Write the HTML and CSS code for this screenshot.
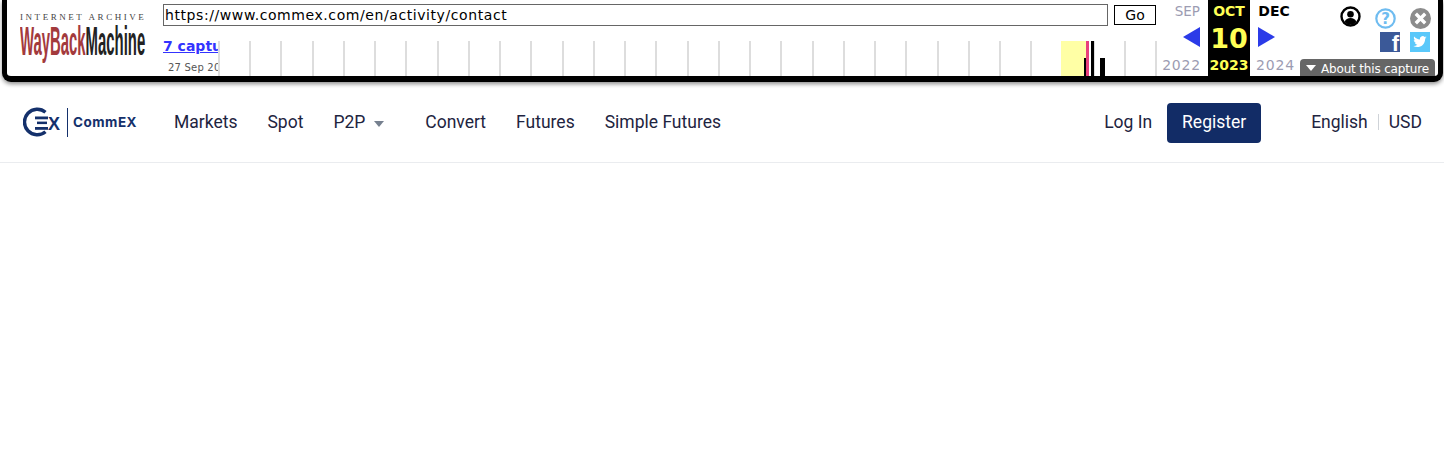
FILE: index.html
```html
<!DOCTYPE html>
<html>
<head>
<meta charset="utf-8">
<title>CommEX</title>
<link rel="stylesheet" href="styles.css">
</head>
<body>
	<div class="wm-bar">
		<div class="wm-logo">
			<div class="wm-ia">INTERNET ARCHIVE</div>
			<div class="wm-wb"><span class="wm-way">WayBack</span><span class="wm-mach">Machine</span></div>
		</div>

		<div class="wm-mid">
			<div class="wm-urlrow">
				<div class="wm-url">https://www.commex.com/en/activity/contact</div>
				<div class="wm-go">Go</div>
			</div>
			<div class="wm-lower">
				<div class="wm-caps">
					<a class="wm-caps-link" href="#">7 captures</a>
					<div class="wm-caps-date">27 Sep 2022 - 10 Oct 2023</div>
				</div>
				<div class="wm-spark">
					<div class="wm-year"></div>
					<div class="wm-tick wm-t1"></div>
					<div class="wm-tick wm-t2"></div>
					<div class="wm-tick wm-t3"></div>
					<div class="wm-tick wm-t4"></div>
				</div>
			</div>
		</div>

		<div class="wm-cal wm-prev">
			<div class="wm-month">SEP</div>
			<div class="wm-arrow"><svg width="17" height="20" viewBox="0 0 17 20"><path d="M17 0V20L0 10Z" fill="#2b3be8"/></svg></div>
			<div class="wm-yr">2022</div>
		</div>
		<div class="wm-cal wm-now">
			<div class="wm-month">OCT</div>
			<div class="wm-day">10</div>
			<div class="wm-yr">2023</div>
		</div>
		<div class="wm-cal wm-next">
			<div class="wm-month">DEC</div>
			<div class="wm-arrow"><svg width="17" height="20" viewBox="0 0 17 20"><path d="M0 0V20L17 10Z" fill="#2b3be8"/></svg></div>
			<div class="wm-yr">2024</div>
		</div>

		<div class="wm-tools">
			<div class="wm-icons wm-icons-top">
				<svg class="wm-user" width="21" height="21" viewBox="0 0 21 21"><circle cx="10.5" cy="10.5" r="9" fill="#fff" stroke="#000" stroke-width="2.4"/><circle cx="10.5" cy="8.2" r="3.3" fill="#000"/><path d="M4.6 16c1-3 3.2-4 5.9-4s4.900 1 5.900 4c-1.600 1.700-3.700 2.600-5.900 2.600S6.200 17.700 4.600 16Z" fill="#000"/></svg>
				<svg class="wm-help" width="21" height="21" viewBox="0 0 21 21"><circle cx="10.500" cy="10.500" r="9.200" fill="#fff" stroke="#6fbcf0" stroke-width="2.200"/><text x="10.500" y="16" text-anchor="middle" class="wm-q">?</text></svg>
				<svg class="wm-close" width="21" height="21" viewBox="0 0 21 21"><circle cx="10.500" cy="10.500" r="10.500" fill="#8c8c8c"/><path d="M5.800 5.800L15.200 15.200M15.200 5.800L5.800 15.200" stroke="#fff" stroke-width="3.400"/></svg>
			</div>
			<div class="wm-icons wm-icons-low">
				<div class="wm-fb">f</div>
				<svg class="wm-tw" width="20" height="20" viewBox="0 0 20 20"><rect width="20" height="20" fill="#5ac8fa"/><path d="M16.800 5.400c-.5.200-1 .4-1.600.4.600-.3 1-.9 1.200-1.500-.5.300-1.100.5-1.700.7a2.800 2.800 0 0 0-4.800 2.500C7.600 7.400 5.600 6.300 4.200 4.600c-.7 1.300-.3 2.900.9 3.700-.4 0-.9-.1-1.300-.3 0 1.400 1 2.500 2.300 2.800-.4.100-.8.100-1.300 0 .4 1.100 1.400 1.900 2.600 1.900-1.200.9-2.700 1.300-4.100 1.200 4.200 2.700 11.800.9 11.900-7.400.6-.4 1.100-.9 1.600-1.100Z" fill="#fff"/></svg>
			</div>
		</div>

		<div class="wm-about"><span class="wm-about-arrow"></span>About this capture</div>
	</div>

	<div class="nav">
		<a class="logo" href="#">
			<svg width="44" height="30" viewBox="0 0 44 30">
				<path d="M22.500 5.200A12.800 12.800 0 1 0 22.500 24.800" fill="none" stroke="#14306b" stroke-width="3.400"/>
				<rect x="12" y="9.500" width="13" height="2.800" fill="#14306b"/>
				<rect x="14" y="14.600" width="10" height="2.500" fill="#14306b"/>
				<rect x="12" y="20" width="13" height="2.800" fill="#14306b"/>
				<text x="25" y="22.800" class="logo-x">X</text>
			</svg>
			<span class="logo-line"></span>
			<span class="logo-name">CommEX</span>
		</a>
		<div class="nav-links">
			<a href="#">Markets</a>
			<a href="#">Spot</a>
			<a class="nav-p2p" href="#">P2P<span class="caret"></span></a>
			<a href="#">Convert</a>
			<a href="#">Futures</a>
			<a href="#">Simple Futures</a>
		</div>
		<div class="nav-right">
			<a class="login" href="#">Log In</a>
			<a class="register" href="#">Register</a>
			<a class="lang" href="#">English</a>
			<span class="nav-sep"></span>
			<a class="usd" href="#">USD</a>
		</div>
	</div>
</body>
</html>
```

FILE: styles.css
```css
* {
  box-sizing: border-box;
}

body {
  margin: 0;
  background: #fff;
  font-family: "Roboto", sans-serif;
}

a {
  text-decoration: none;
  color: inherit;
}

/* wayback toolbar */
.wm-bar {
  position: relative;
  display: flex;
  height: 82px;
  margin: 0 1px 0 2px;
  background: #fff;
  border: solid #000;
  border-width: 0 5px 6px 5px;
  border-radius: 0 0 9px 9px;
  box-shadow: 0 2px 4px rgba(0, 0, 0, .45);
  font-family: "DejaVu Sans", sans-serif;
  overflow: visible;
}

.wm-logo {
  width: 156px;
  padding: 12px 0 0 13px;
}

.wm-ia {
  width: 128px;
  font-family: "Liberation Serif", serif;
  font-size: 9px;
  line-height: 10px;
  letter-spacing: 2.55px;
  color: #444;
  white-space: nowrap;
}

.wm-wb {
  display: flex;
  height: 34px;
  margin-top: 1px;
  font-family: "Liberation Sans", sans-serif;
  font-size: 40px;
  line-height: 36px;
  font-weight: bold;
  white-space: nowrap;
  transform: scaleX(.372);
  transform-origin: left top;
}

.wm-way {
  color: #a33a3d;
}

.wm-mach {
  color: #222;
}

.wm-mid {
  width: 997px;
  flex: none;
}

.wm-urlrow {
  display: flex;
  align-items: flex-start;
  gap: 6px;
  padding-top: 4px;
}

.wm-url {
  width: 945px;
  height: 22px;
  padding-left: 1px;
  border: 1px solid #666;
  font-size: 14px;
  line-height: 20px;
  letter-spacing: .58px;
  color: #000;
}

.wm-go {
  width: 42px;
  height: 20px;
  margin-top: 1px;
  border: 1px solid #000;
  font-size: 14px;
  line-height: 19px;
  text-align: center;
}

.wm-lower {
  display: flex;
  height: 50px;
}

.wm-caps {
  width: 55px;
  flex: none;
  overflow: hidden;
  white-space: nowrap;
}

.wm-caps-link {
  display: block;
  margin-top: 12px;
  font-size: 14px;
  line-height: 17px;
  font-weight: bold;
  color: #3333ff;
  text-decoration: underline;
}

.wm-caps-date {
  margin: 6px 0 0 5px;
  font-size: 10px;
  line-height: 13px;
  letter-spacing: .2px;
  color: #555;
}

.wm-spark {
  position: relative;
  width: 940px;
  height: 35px;
  margin-top: 15px;
  background: repeating-linear-gradient(to right, #ddd 0, #ddd 2px, transparent 2px, transparent 31.25px);
}

.wm-year {
  position: absolute;
  left: 843px;
  top: 0;
  width: 25px;
  height: 35px;
  background: #ffffa5;
}

.wm-tick {
  position: absolute;
  bottom: 0;
}

.wm-t1 {
  left: 866px;
  width: 3px;
  height: 18px;
  background: #000;
}

.wm-t2 {
  left: 868px;
  width: 3px;
  height: 35px;
  background: #e8407c;
}

.wm-t3 {
  left: 873px;
  width: 3px;
  height: 35px;
  background: #000;
}

.wm-t4 {
  left: 882px;
  width: 5px;
  height: 18px;
  background: #000;
}

.wm-cal {
  flex: none;
  text-align: center;
  font-weight: bold;
}

.wm-month {
  height: 22px;
  padding-top: 2px;
  font-size: 14px;
  line-height: 18px;
}

.wm-yr {
  padding-top: 1px;
  font-size: 14px;
  line-height: 18px;
}

.wm-arrow {
  height: 33px;
  padding-top: 5px;
  line-height: 0;
}

.wm-prev {
  width: 48px;
  color: #9c9cb2;
  text-align: right;
}

.wm-prev .wm-month {
  padding-right: 8px;
  font-weight: normal;
  font-size: 13.500px;
}

.wm-prev .wm-arrow {
  padding-left: 23px;
  text-align: left;
}

.wm-prev .wm-yr {
  padding-right: 7px;
  font-weight: normal;
  letter-spacing: .8px;
}

.wm-now {
  width: 42px;
  background: #000;
  color: #ffff55;
}

.wm-day {
  height: 33px;
  font-size: 27px;
  line-height: 33px;
}

.wm-next {
  width: 48px;
  color: #000;
}

.wm-next .wm-arrow {
  padding-left: 8px;
  text-align: left;
}

.wm-next .wm-month {
  padding-right: 0;
}

.wm-next .wm-yr {
  padding-left: 3px;
  font-weight: normal;
  letter-spacing: .9px;
  color: #9c9cb2;
}

.wm-tools {
  flex: 1;
  padding-left: 42px;
}

.wm-icons {
  display: flex;
}

.wm-icons-top {
  padding-top: 6px;
  height: 32px;
}

.wm-help {
  margin: 2px 0 0 14px;
}

.wm-close {
  margin: 2px 0 0 14px;
}

.wm-q {
  font-family: "DejaVu Sans", sans-serif;
  font-size: 15px;
  font-weight: bold;
  fill: #6fbcf0;
}

.wm-icons-low {
  padding-left: 40px;
  gap: 10px;
}

.wm-fb {
  width: 20px;
  height: 20px;
  padding-right: 1px;
  background: #3b5998;
  color: #fff;
  font-family: "Liberation Sans", sans-serif;
  font-size: 22px;
  line-height: 24px;
  font-weight: bold;
  text-align: right;
}

.wm-about {
  position: absolute;
  left: 1293px;
  top: 59px;
  width: 135px;
  height: 17px;
  padding-left: 6px;
  border-radius: 4px 4px 0 0;
  background: #666;
  color: #fff;
  font-size: 12px;
  line-height: 20px;
  letter-spacing: -.17px;
  white-space: nowrap;
}

.wm-about-arrow {
  display: inline-block;
  margin-right: 5px;
  border: solid transparent;
  border-width: 6px 5px 0 5px;
  border-top-color: #fff;
  vertical-align: 2px;
}

/* site header */
.nav {
  display: flex;
  align-items: center;
  height: 81px;
  padding: 0 22px 0 23px;
  border-bottom: 1px solid #eaecef;
  color: #1e2440;
  font-size: 17.500px;
}

.logo {
  display: flex;
  align-items: center;
  width: 151px;
  color: #14306b;
}

.logo svg {
  flex: none;
}

.logo-x {
  font-family: "Liberation Sans", sans-serif;
  font-size: 18px;
  font-weight: bold;
  fill: #14306b;
}

.logo-line {
  width: 1px;
  height: 29px;
  margin-right: 5px;
  background: #14306b;
}

.logo-name {
  font-family: "Inter", sans-serif;
  font-size: 13.500px;
  font-weight: 700;
  letter-spacing: .5px;
}

.nav-links {
  display: flex;
  gap: 30px;
}

.nav-p2p {
  display: flex;
  align-items: center;
  padding-right: 11px;
}

.caret {
  margin: 3px 0 0 9px;
  border: solid transparent;
  border-width: 6px 5.500px 0 5.500px;
  border-top-color: #76808f;
}

.nav-right {
  display: flex;
  align-items: center;
  margin-left: auto;
}

.register {
  width: 94px;
  height: 40px;
  margin: 2px 50px 0 15px;
  border-radius: 4px;
  background: #122c66;
  color: #fff;
  line-height: 38px;
  text-align: center;
}

.nav-sep {
  width: 1px;
  height: 16px;
  margin: 0 10px;
  background: #cfd3d8;
}
```
